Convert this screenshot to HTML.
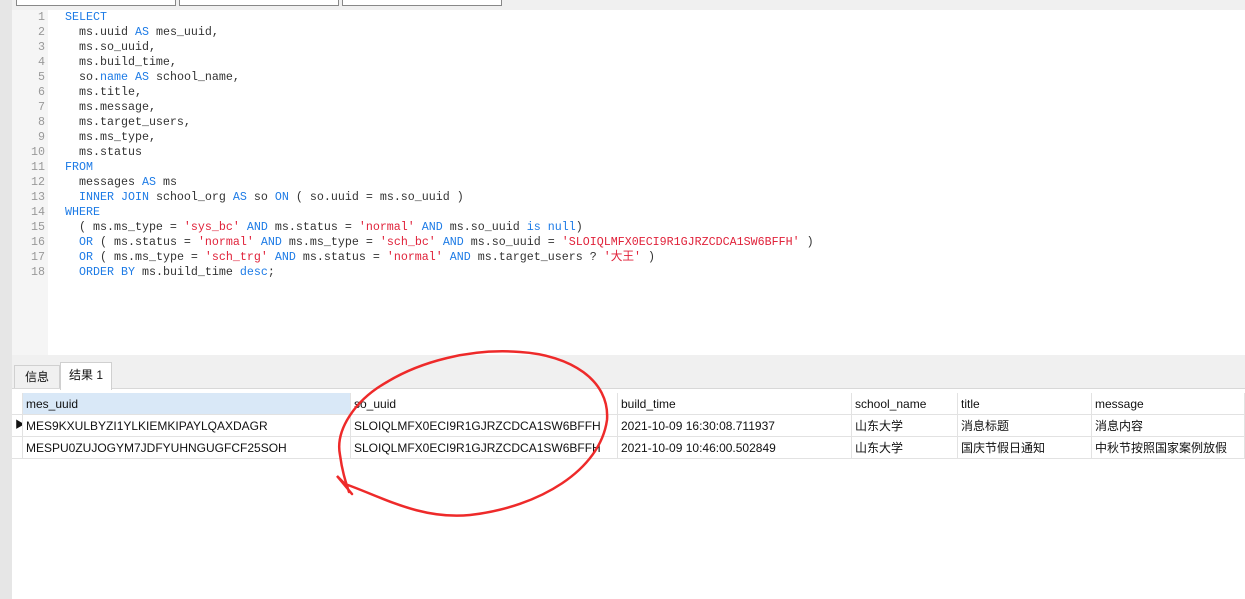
<!DOCTYPE html>
<html><head><meta charset="utf-8"><style>
body{margin:0;width:1245px;height:599px;overflow:hidden;background:#fff;font-family:"Liberation Sans","Noto Sans CJK SC",sans-serif;position:relative}
.abs{position:absolute}
.code{position:absolute;left:65px;top:10px;font-family:"Liberation Mono","Noto Sans CJK SC",monospace;font-size:11.66px;line-height:15px;color:#333;white-space:pre}
.ln{position:absolute;left:12px;top:10px;width:36px;height:345px;background:#f5f5f5;font-family:"Liberation Mono",monospace;font-size:11.66px;line-height:15px;color:#999;text-align:right}
.ln div{padding-right:3px}
.k{color:#1d7be6}.s{color:#e0223a}
.row{position:absolute;left:12px;height:22px;font-size:12px;line-height:22px;color:#111}
.c{position:absolute;top:0;height:100%;border-right:1px solid #e2e2e2;border-bottom:1px solid #e2e2e2;box-sizing:border-box;padding-left:3px;white-space:nowrap;overflow:hidden}
</style></head><body>
<div class="abs" style="left:0;top:0;width:12px;height:599px;background:#e6e6e6"></div>
<div class="abs" style="left:12px;top:0;width:1233px;height:10px;background:#f0f0f0"></div>
<div class="abs" style="left:16px;top:-2px;width:158px;height:6px;border:1px solid #888;background:#fff"></div>
<div class="abs" style="left:179px;top:-2px;width:158px;height:6px;border:1px solid #888;background:#fff"></div>
<div class="abs" style="left:342px;top:-2px;width:158px;height:6px;border:1px solid #888;background:#fff"></div>
<div class="ln"><div>1</div><div>2</div><div>3</div><div>4</div><div>5</div><div>6</div><div>7</div><div>8</div><div>9</div><div>10</div><div>11</div><div>12</div><div>13</div><div>14</div><div>15</div><div>16</div><div>17</div><div>18</div></div>
<div class="code"><span class="k">SELECT</span>
  ms.uuid <span class="k">AS</span> mes_uuid,
  ms.so_uuid,
  ms.build_time,
  so.<span class="k">name</span> <span class="k">AS</span> school_name,
  ms.title,
  ms.message,
  ms.target_users,
  ms.ms_type,
  ms.status
<span class="k">FROM</span>
  messages <span class="k">AS</span> ms
  <span class="k">INNER JOIN</span> school_org <span class="k">AS</span> so <span class="k">ON</span> ( so.uuid = ms.so_uuid )
<span class="k">WHERE</span>
  ( ms.ms_type = <span class="s">'sys_bc'</span> <span class="k">AND</span> ms.status = <span class="s">'normal'</span> <span class="k">AND</span> ms.so_uuid <span class="k">is null</span>)
  <span class="k">OR</span> ( ms.status = <span class="s">'normal'</span> <span class="k">AND</span> ms.ms_type = <span class="s">'sch_bc'</span> <span class="k">AND</span> ms.so_uuid = <span class="s">'SLOIQLMFX0ECI9R1GJRZCDCA1SW6BFFH'</span> )
  <span class="k">OR</span> ( ms.ms_type = <span class="s">'sch_trg'</span> <span class="k">AND</span> ms.status = <span class="s">'normal'</span> <span class="k">AND</span> ms.target_users ? <span class="s">'大王'</span> )
  <span class="k">ORDER BY</span> ms.build_time <span class="k">desc</span>;</div>
<div class="abs" style="left:12px;top:355px;width:1233px;height:5px;background:#f0f0f0"></div>
<div class="abs" style="left:12px;top:360px;width:1233px;height:28px;background:#f0f0f0;border-bottom:1px solid #d8d8d8"></div>
<div class="abs" style="left:14px;top:365px;width:44px;height:22px;border:1px solid #d0d0d0;border-bottom:none;font-size:12px;line-height:22px;text-align:center;color:#111">信息</div>
<div class="abs" style="left:60px;top:362px;width:50px;height:27px;background:#fff;border:1px solid #d0d0d0;border-bottom:none;font-size:12px;line-height:24px;text-align:center;color:#111">结果 1</div>
<div class="row" style="top:393px;width:1233px">
<div class="c" style="left:0;width:11px;background:#fff"></div>
<div class="c" style="left:11px;width:328px;background:#d9e8f7">mes_uuid</div>
<div class="c" style="left:339px;width:267px">so_uuid</div>
<div class="c" style="left:606px;width:234px">build_time</div>
<div class="c" style="left:840px;width:106px">school_name</div>
<div class="c" style="left:946px;width:134px">title</div>
<div class="c" style="left:1080px;width:153px">message</div>
</div>
<div class="row" style="top:415px;width:1233px">
<div class="c" style="left:0;width:11px;font-size:10px">&#9654;</div>
<div class="c" style="left:11px;width:328px">MES9KXULBYZI1YLKIEMKIPAYLQAXDAGR</div>
<div class="c" style="left:339px;width:267px">SLOIQLMFX0ECI9R1GJRZCDCA1SW6BFFH</div>
<div class="c" style="left:606px;width:234px">2021-10-09 16:30:08.711937</div>
<div class="c" style="left:840px;width:106px">山东大学</div>
<div class="c" style="left:946px;width:134px">消息标题</div>
<div class="c" style="left:1080px;width:153px">消息内容</div>
</div>
<div class="row" style="top:437px;width:1233px">
<div class="c" style="left:0;width:11px"></div>
<div class="c" style="left:11px;width:328px">MESPU0ZUJOGYM7JDFYUHNGUGFCF25SOH</div>
<div class="c" style="left:339px;width:267px">SLOIQLMFX0ECI9R1GJRZCDCA1SW6BFFH</div>
<div class="c" style="left:606px;width:234px">2021-10-09 10:46:00.502849</div>
<div class="c" style="left:840px;width:106px">山东大学</div>
<div class="c" style="left:946px;width:134px">国庆节假日通知</div>
<div class="c" style="left:1080px;width:153px">中秋节按照国家案例放假</div>
</div>
<svg class="abs" style="left:0;top:0" width="1245" height="599"><path d="M352,494 L337,476 L345,484 C380,496 420,520 470,515 C540,507 600,470 607,420 C610,380 570,355 520,352 C470,348 420,362 387,382 C355,400 335,430 340,455 C342,470 345,480 349,492" fill="none" stroke="#ee2a2a" stroke-width="2.5" stroke-linecap="round"/></svg>
</body></html>
